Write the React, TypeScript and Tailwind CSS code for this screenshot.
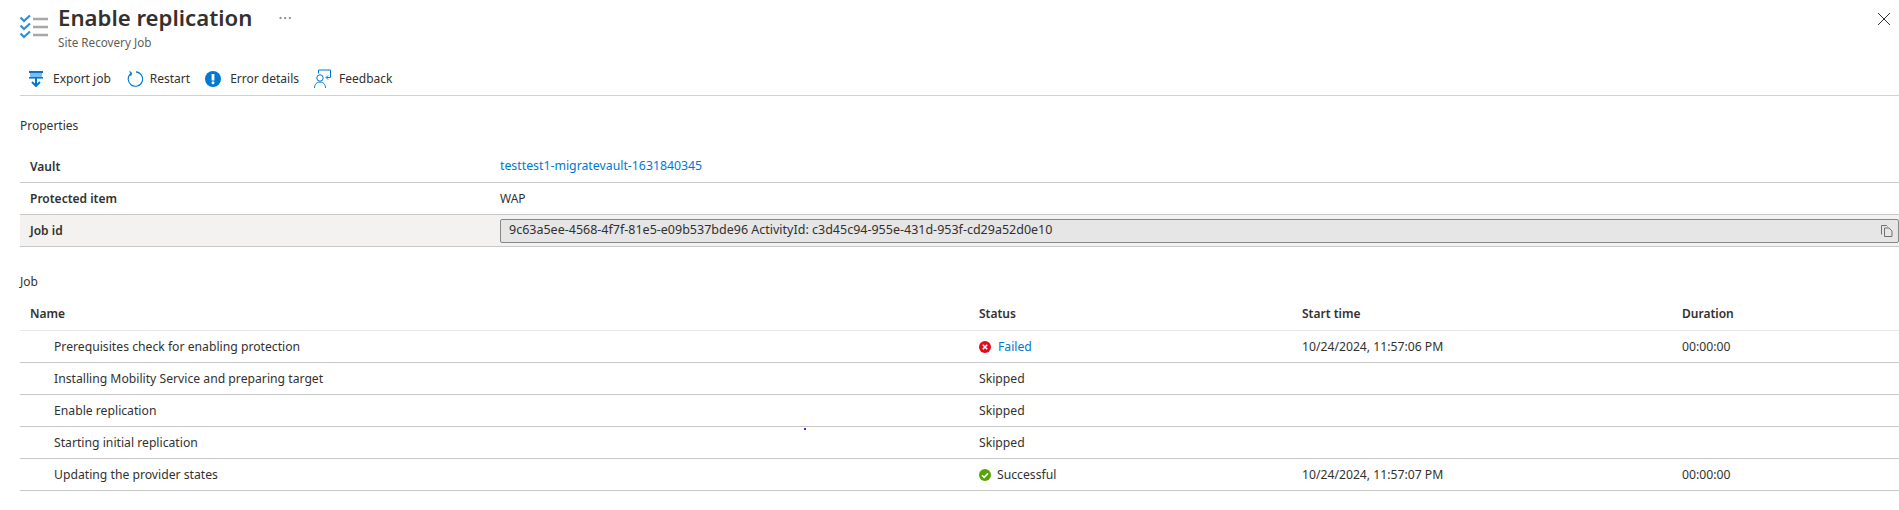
import { MoreHorizontal } from "lucide-react";

const font = "font-['Noto_Sans',sans-serif]";

function ChecklistIcon() {
  return (
    <svg width="28" height="24" viewBox="0 0 28 24" fill="none">
      <path d="M0.5 2.5l3.5 3.5 6-5.5M0.5 10.5l3.5 3.5 6-5.5M0.5 18.5l3.5 3.5 6-5.5" stroke="#2b8fe0" strokeWidth="2.2" />
      <path d="M13 4h15M13 12h15M13 20h15" stroke="#a8a8a8" strokeWidth="2.4" />
    </svg>
  );
}

function CloseIcon() {
  return (
    <svg width="12" height="12" viewBox="0 0 12 12" fill="none">
      <path d="M0 0l12 12M12 0L0 12" stroke="#323130" strokeWidth="1" />
    </svg>
  );
}

function ExportIcon() {
  return (
    <svg width="14" height="16" viewBox="0 0 14 16" fill="none">
      <rect x="0" y="0" width="14" height="2" fill="#0078d4" />
      <rect x="1" y="2" width="12" height="4" fill="#7fbce8" />
      <rect x="0" y="6" width="14" height="1.6" fill="#0078d4" />
      <path d="M7 6v9M3 11l4 4 4-4" stroke="#0078d4" strokeWidth="2" />
    </svg>
  );
}

function RestartIcon() {
  return (
    <svg width="16" height="16" viewBox="0 0 16 16" fill="none">
      <path d="M4.2 2.2A7.2 7.2 0 1 0 9 0.9" stroke="#0078d4" strokeWidth="1.1" />
      <path d="M2.5 0.5l2 1.6L3.6 5" stroke="#0078d4" strokeWidth="1.1" />
    </svg>
  );
}

function ErrorIcon() {
  return (
    <svg width="16" height="16" viewBox="0 0 16 16">
      <circle cx="8" cy="8" r="8" fill="#0078d4" />
      <rect x="6.6" y="3" width="2.8" height="6.5" fill="#fff" />
      <circle cx="8" cy="11.8" r="1.5" fill="#fff" />
    </svg>
  );
}

function FeedbackIcon() {
  return (
    <svg width="17" height="19" viewBox="0 0 17 19" fill="none">
      <path d="M4.5 4.5V1h12v7.5h-4M14 6.5l-2 2 2 2" stroke="#0078d4" strokeWidth="1" />
      <circle cx="6" cy="9" r="3.2" stroke="#0078d4" strokeWidth="1" />
      <path d="M0.5 19c0-3.500 2.200-6 5.500-6s5.500 2.500 5.500 6" stroke="#0078d4" strokeWidth="1" />
    </svg>
  );
}

function CopyIcon() {
  return (
    <svg width="12" height="12" viewBox="0 0 12 12" fill="none">
      <path d="M0.500 9.500V0.500h5l1 1" stroke="#707070" strokeWidth="1" />
      <path d="M3.500 11.500V3h4.500l3 3v5.500z" stroke="#707070" strokeWidth="1" fill="#e6e6e6" />
    </svg>
  );
}

function FailedIcon() {
  return (
    <svg width="12" height="12" viewBox="0 0 12 12">
      <circle cx="6" cy="6" r="6" fill="#e00b1c" />
      <path d="M3.800 3.800l4.400 4.400M8.200 3.800l-4.400 4.400" stroke="#fff" strokeWidth="1.600" />
    </svg>
  );
}

function SuccessIcon() {
  return (
    <svg width="12" height="12" viewBox="0 0 12 12">
      <circle cx="6" cy="6" r="6" fill="#57a300" />
      <path d="M3 6.200l2.200 2.200L9 4.400" stroke="#fff" strokeWidth="1.600" fill="none" />
    </svg>
  );
}

const jobs = [
  { name: "Prerequisites check for enabling protection", status: "Failed", start: "10/24/2024, 11:57:06 PM", duration: "00:00:00" },
  { name: "Installing Mobility Service and preparing target", status: "Skipped", start: "", duration: "" },
  { name: "Enable replication", status: "Skipped", start: "", duration: "" },
  { name: "Starting initial replication", status: "Skipped", start: "", duration: "" },
  { name: "Updating the provider states", status: "Successful", start: "10/24/2024, 11:57:07 PM", duration: "00:00:00" },
];

export default function App() {
  return (
    <div className={`${font} h-[510px] w-[1899px] overflow-hidden bg-white text-[12px] text-[#323130]`}>
      {/* header */}
      <div className="flex h-[60px] items-start">
        <div className="ml-[20px] mt-[15px]">
          <ChecklistIcon />
        </div>
        <div className="ml-[10px] mt-[2px]">
          <div className="flex items-center">
            <span className="text-[22.2px] font-semibold leading-[32px]">Enable replication</span>
            <MoreHorizontal className="ml-[25px] h-4 w-4 text-[#605e5c]" strokeWidth={1} />
          </div>
          <div className="text-[11.7px] leading-[16px] text-[#605e5c]">Site Recovery Job</div>
        </div>
        <div className="ml-auto mr-[9px] mt-[13px]">
          <CloseIcon />
        </div>
      </div>

      {/* toolbar */}
      <div className="ml-[20px] flex h-[36px] items-center border-b border-[#d0d0d0] pl-[9px] pt-[2px]">
        <ExportIcon />
        <span className="ml-[10px]">Export job</span>
        <span className="ml-[16px]"><RestartIcon /></span>
        <span className="ml-[7px]">Restart</span>
        <span className="ml-[15px]"><ErrorIcon /></span>
        <span className="ml-[9px]">Error details</span>
        <span className="ml-[15px]"><FeedbackIcon /></span>
        <span className="ml-[8px]">Feedback</span>
      </div>

      <div className="ml-[20px]">
        <div className="mt-[21px] h-[34px]">Properties</div>

        {/* properties */}
        <div className="grid grid-cols-[480px_1fr] [&>div]:flex [&>div]:items-center">
          <div className="h-[32px] border-b border-[#c8c8c8] pl-[10px] font-semibold">Vault</div>
          <div className="h-[32px] border-b border-[#c8c8c8] text-[12.3px] text-[#0078d4]">testtest1-migratevault-1631840345</div>
          <div className="h-[32px] border-b border-[#c8c8c8] pl-[10px] font-semibold">Protected item</div>
          <div className="h-[32px] border-b border-[#c8c8c8]">WAP</div>
          <div className="h-[32px] border-b border-[#c8c8c8] bg-[#f3f2f1] pl-[10px] font-semibold">Job id</div>
          <div className="h-[32px] border-b border-[#c8c8c8] bg-[#f3f2f1]">
            <div className="flex h-[24px] w-full items-center justify-between rounded-[2px] border border-[#8a8886] bg-[#e6e6e6] pl-[8px] pr-[5px]">
              <span className="text-[12.5px]">9c63a5ee-4568-4f7f-81e5-e09b537bde96 ActivityId: c3d45c94-955e-431d-953f-cd29a52d0e10</span>
              <CopyIcon />
            </div>
          </div>
        </div>

        <div className="mt-[26px] h-[26px]">Job</div>

        {/* job table */}
        <div className="grid h-[32px] grid-cols-[959px_323px_380px_1fr] items-center border-b border-[#e8e8e8] pb-[1px] font-semibold">
          <div className="pl-[10px]">Name</div>
          <div>Status</div>
          <div>Start time</div>
          <div>Duration</div>
        </div>
        {jobs.map((job) => (
          <div key={job.name} className="relative grid h-[32px] grid-cols-[959px_323px_380px_1fr] items-center border-b border-[#c8c8c8] pt-[2px] text-[12.2px]">
            {job.name === "Starting initial replication" && (
              <span className="absolute left-[784px] top-[1px] h-[2px] w-[2px] bg-[#2a2aff]" />
            )}
            <div className="pl-[34px]">{job.name}</div>
            <div className="flex items-center">
              {job.status === "Failed" && <span className="mr-[7px]"><FailedIcon /></span>}
              {job.status === "Successful" && <span className="mr-[6px]"><SuccessIcon /></span>}
              <span className={job.status === "Failed" ? "text-[#0078d4]" : ""}>{job.status}</span>
            </div>
            <div>{job.start}</div>
            <div>{job.duration}</div>
          </div>
        ))}
      </div>
    </div>
  );
}
